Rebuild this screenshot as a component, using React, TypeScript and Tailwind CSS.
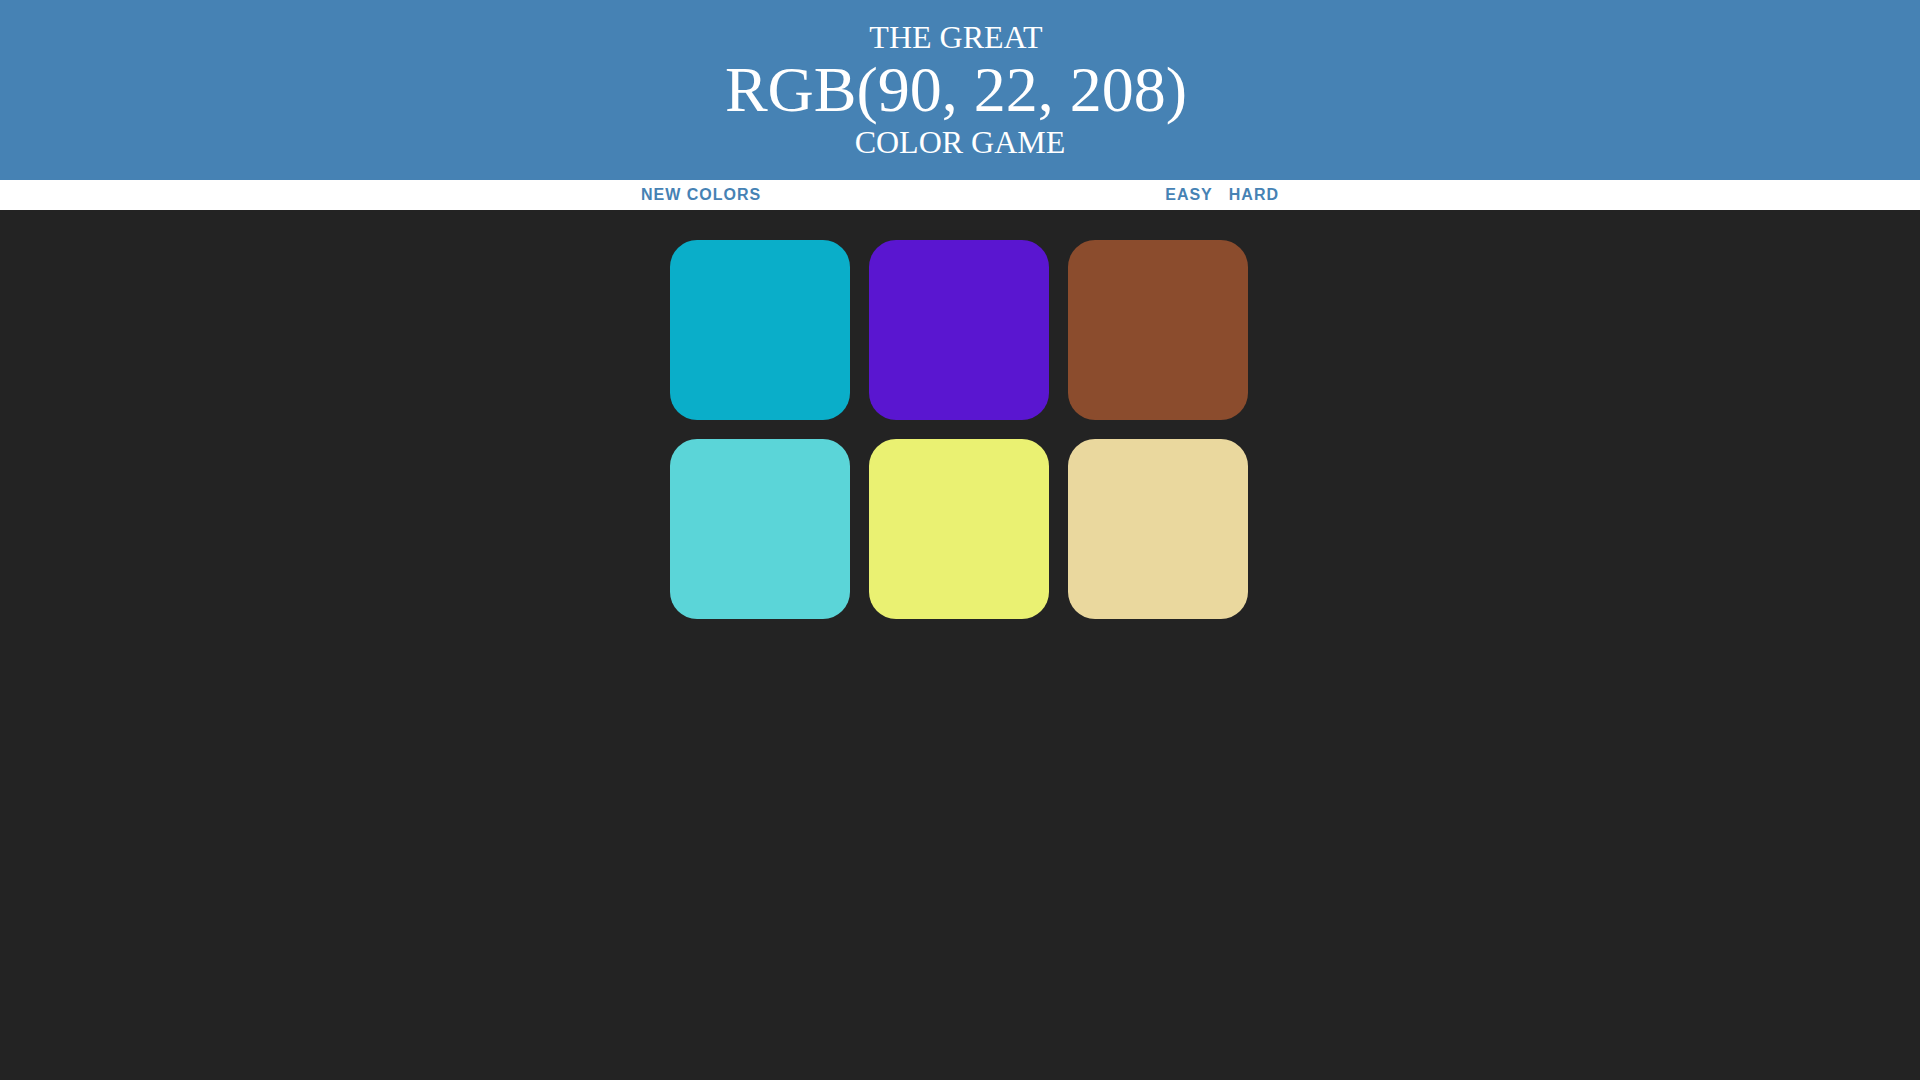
export default function App() {
  const colors = [
    "rgb(10, 174, 201)",
    "rgb(90, 22, 208)",
    "rgb(139, 76, 45)",
    "rgb(91, 213, 216)",
    "rgb(234, 241, 114)",
    "rgb(234, 216, 158)",
  ];
  return (
    <div className="min-h-[1080px] w-full bg-[#232323] font-['Liberation_Serif',serif]">
      <h1 className="m-0 bg-[#4682b4] py-[20px] text-center text-[32px] font-normal uppercase text-white">
        <div className="h-[35px] pr-[8px] leading-[35px]">The Great</div>
        <div className="h-[70px] pr-[8px] text-[64px] leading-[70px]">RGB(90, 22, 208)</div>
        <div className="h-[35px] leading-[35px]">Color Game</div>
      </h1>
      <div className="flex h-[30px] items-stretch justify-center gap-[4px] bg-white">
        <button className="h-full px-[6px] font-['Liberation_Sans',Arial,sans-serif] text-[16px] font-bold uppercase tracking-[1px] text-[#4682b4]">
          New Colors
        </button>
        <span className="inline-block w-[384px]"></span>
        <button className="h-full px-[6px] font-['Liberation_Sans',Arial,sans-serif] text-[16px] font-bold uppercase tracking-[1px] text-[#4682b4]">
          Easy
        </button>
        <button className="h-full px-[6px] font-['Liberation_Sans',Arial,sans-serif] text-[16px] font-bold uppercase tracking-[1px] text-[#4682b4]">
          Hard
        </button>
      </div>
      <div className="mx-auto mt-[30px] grid w-[600px] grid-cols-[180px_180px_180px] gap-[19px] px-[10px]">
        {colors.map((c, i) => (
          <div
            key={i}
            className="h-[180px] w-[180px] rounded-[27px]"
            style={{ backgroundColor: c }}
          />
        ))}
      </div>
    </div>
  );
}
